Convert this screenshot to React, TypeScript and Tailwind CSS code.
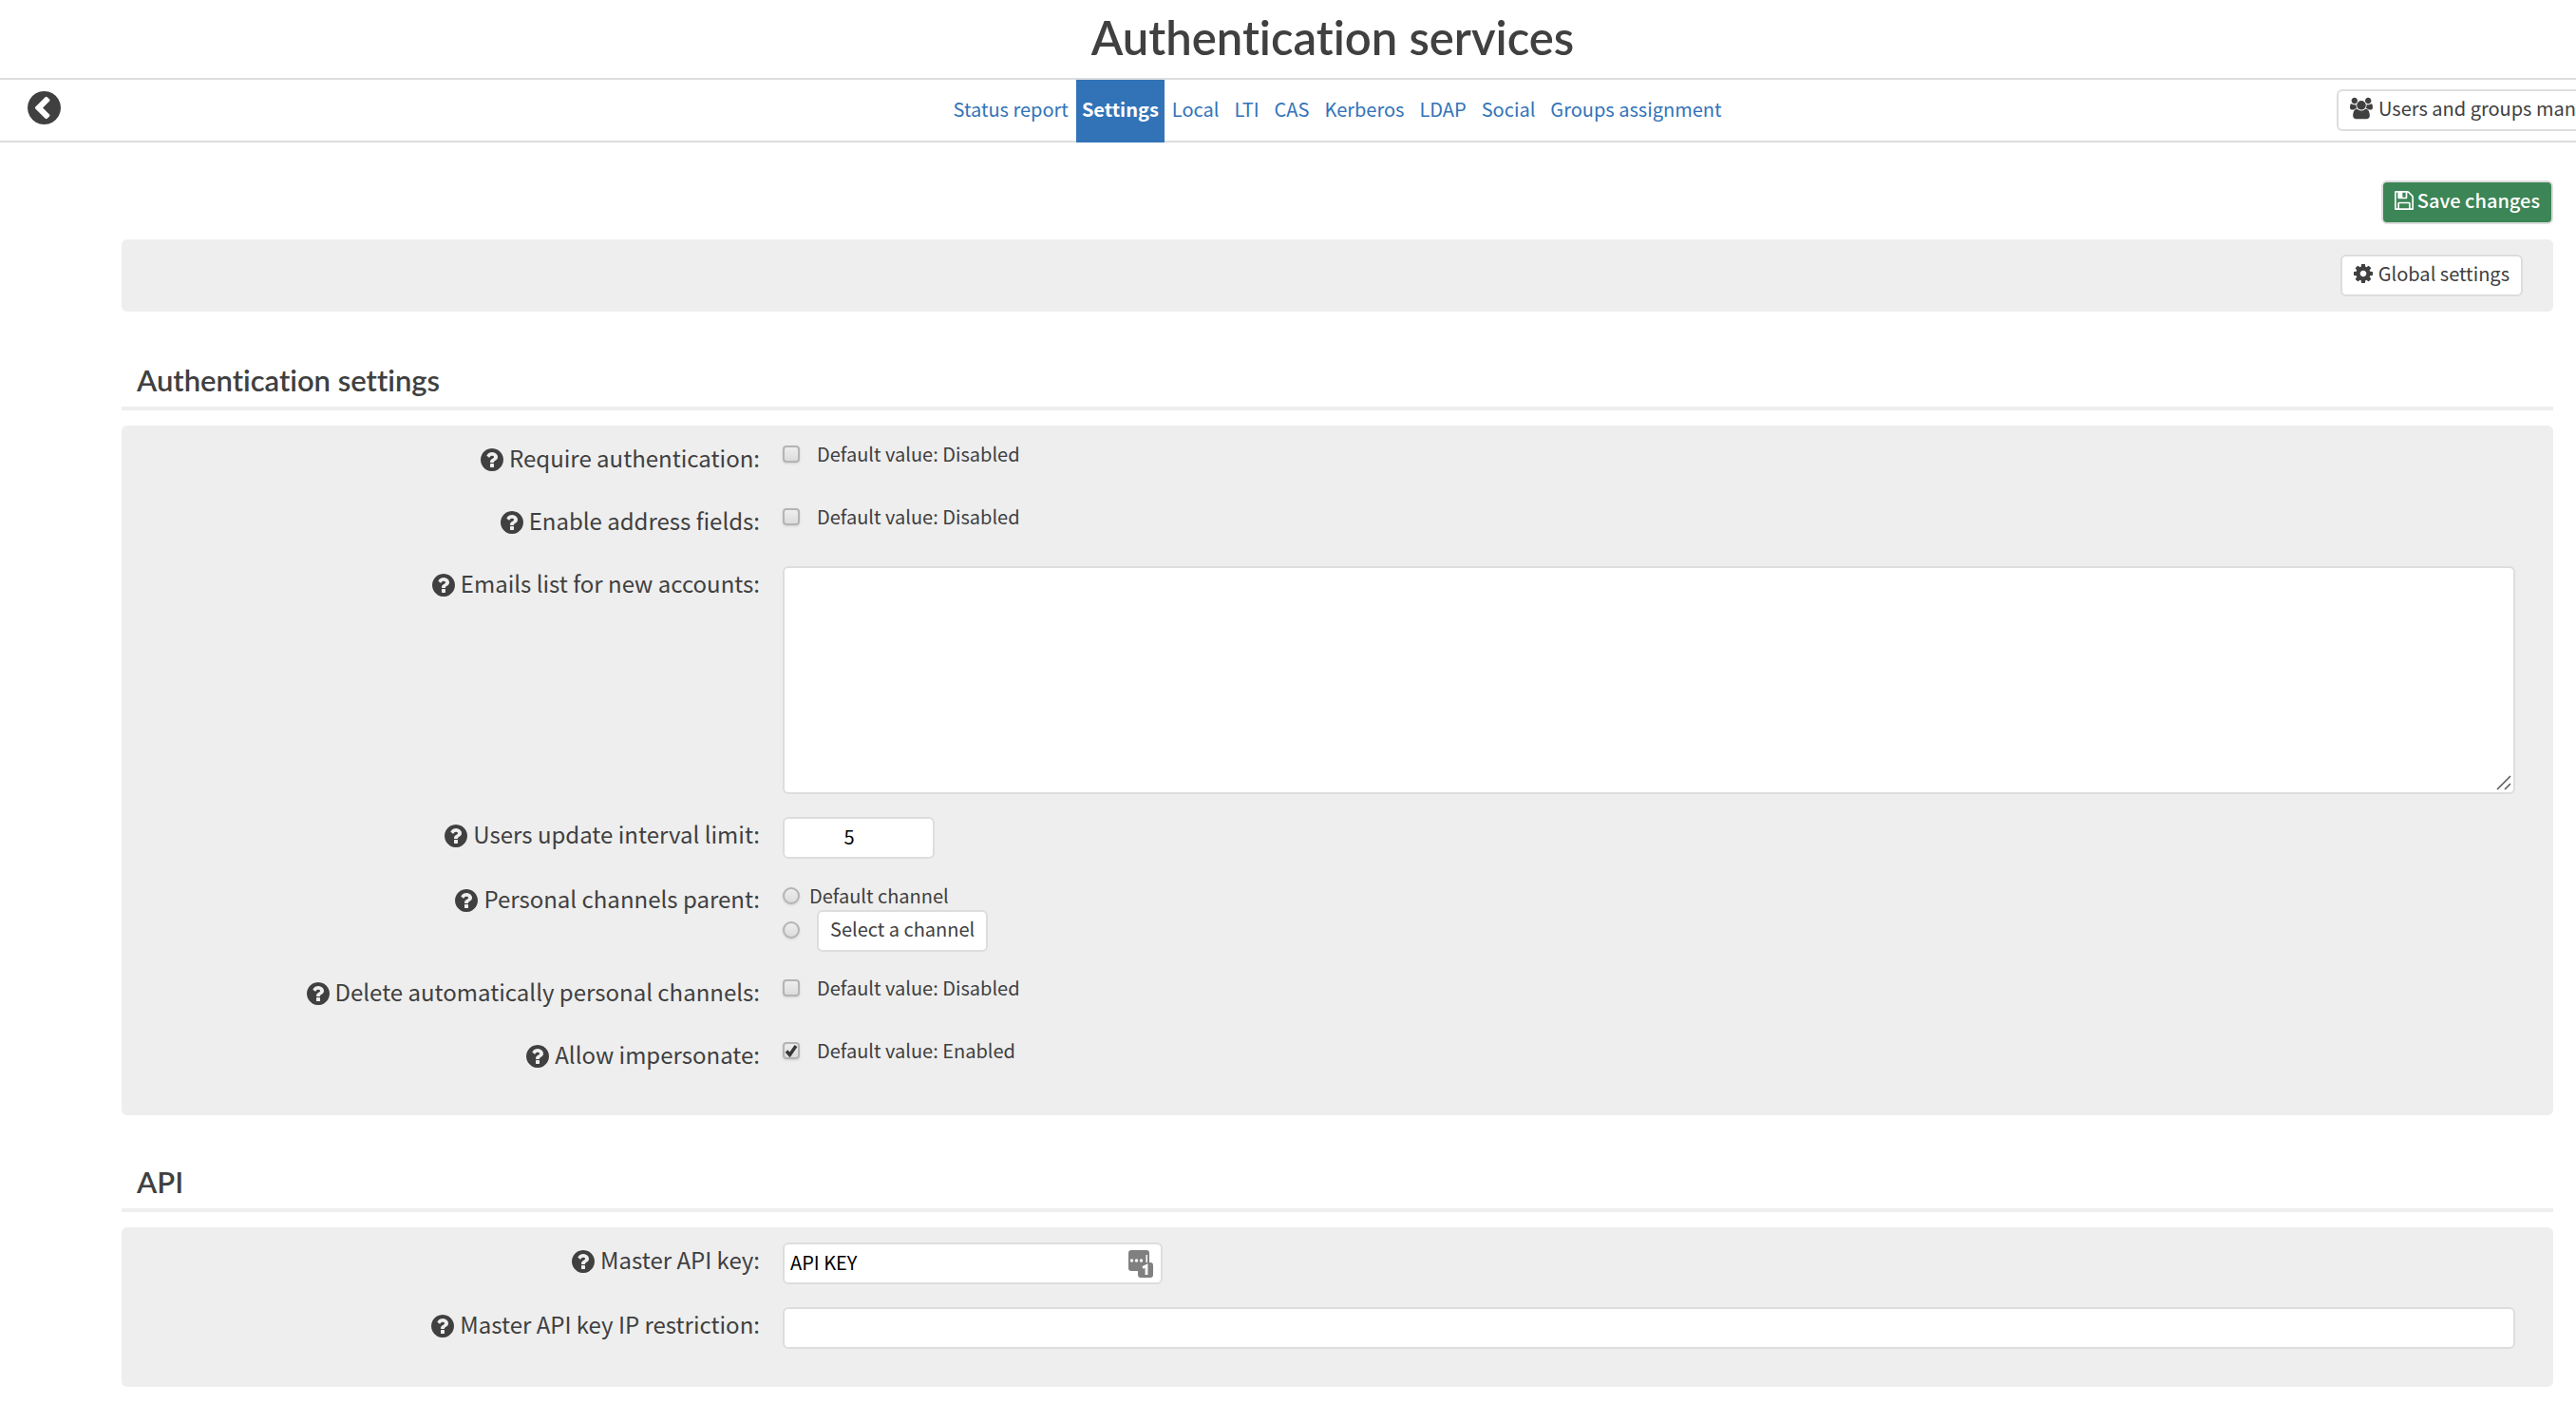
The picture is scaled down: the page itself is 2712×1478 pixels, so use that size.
import React, { useState } from "react";
import type { ReactNode } from "react";

const PATHS = {
  question:
    "M1024 1376v-192q0-14-9-23t-23-9h-192q-14 0-23 9t-9 23v192q0 14 9 23t23 9h192q14 0 23-9t9-23zm256-672q0-88-55.5-163t-138.5-116-170-41q-243 0-371 213-15 24 8 42l132 100q7 6 19 6 16 0 25-12 53-68 86-92 34-24 86-24 48 0 85.5 26t37.5 59q0 38-20 61t-68 45q-63 28-115.5 86.5t-52.5 125.5v36q0 14 9 23t23 9h192q14 0 23-9t9-23q0-19 21.5-49.5t54.5-49.5q32-18 49-28.5t46-35 44.5-48 28-60.5 12.5-81zm384 192q0 209-103 385.5t-279.5 279.5-385.5 103-385.5-103-279.5-279.5-103-385.5 103-385.5 279.5-279.5 385.5-103 385.5 103 279.5 279.5 103 385.5z",
  back:
    "M1037 1395l102-102q19-19 19-45t-19-45l-307-307 307-307q19-19 19-45t-19-45l-102-102q-19-19-45-19t-45 19l-454 454q-19 19-19 45t19 45l454 454q19 19 45 19t45-19zm627-499q0 209-103 385.5t-279.5 279.5-385.5 103-385.5-103-279.5-279.5-103-385.5 103-385.5 279.5-279.5 385.5-103 385.5 103 279.5 279.5 103 385.5z",
  floppy:
    "M512 1536h768v-384h-768v384zm896 0h128v-896q0-14-10-38.5t-20-34.5l-281-281q-10-10-34-20t-39-10v416q0 40-28 68t-68 28h-576q-40 0-68-28t-28-68v-416h-128v1280h128v-416q0-40 28-68t68-28h832q40 0 68 28t28 68v416zm-384-928v-320q0-13-9.5-22.5t-22.5-9.5h-192q-13 0-22.5 9.5t-9.5 22.5v320q0 13 9.5 22.5t22.5 9.5h192q13 0 22.5-9.5t9.5-22.5zm640 32v928q0 40-28 68t-68 28h-1344q-40 0-68-28t-28-68v-1344q0-40 28-68t68-28h928q40 0 88 20t76 48l280 280q28 28 48 76t20 88z",
  cog:
    "M1152 896q0-106-75-181t-181-75-181 75-75 181 75 181 181 75 181-75 75-181zm512-109v222q0 12-8 23t-20 13l-185 28q-19 54-39 91 35 50 107 138 10 12 10 25t-9 23q-27 37-99 108t-94 71q-12 0-26-9l-138-108q-44 23-91 38-16 136-29 186-7 28-36 28h-222q-14 0-24.5-8.5t-11.5-21.5l-28-184q-49-16-90-37l-141 107q-10 9-25 9-14 0-25-11-126-114-165-168-7-10-7-23 0-12 8-23 15-21 51-66.5t54-70.5q-27-50-41-99l-183-27q-13-2-21-12.5t-8-23.5v-222q0-12 8-23t19-13l186-28q14-46 39-92-40-57-107-138-10-12-10-24 0-10 9-23 26-36 98.5-107.5t94.5-71.5q13 0 26 10l138 107q44-23 91-38 16-136 29-186 7-28 36-28h222q14 0 24.5 8.5t11.5 21.5l28 184q49 16 90 37l142-107q9-9 24-9 13 0 25 10 129 119 165 170 7 8 7 22 0 12-8 23-15 21-51 66.5t-54 70.5q26 50 41 98l183 28q13 2 21 12.5t8 23.5z",
  users:
    "M593 896q-162 5-265 128h-134q-82 0-138-40.5t-56-118.5q0-353 124-353 6 0 43.5 21t97.5 42.5 119 21.5q67 0 133-23-5 37-5 66 0 139 81 256zm1071 637q0 120-73 189.5t-194 69.5h-874q-121 0-194-69.5t-73-189.5q0-53 3.5-103.5t14-109 26.5-108.5 43-97.5 62-81 85.5-53.5 111.5-20q10 0 43 21.5t73 48 107 48 135 21.5 135-21.5 107-48 73-48 43-21.5q61 0 111.5 20t85.5 53.5 62 81 43 97.5 26.5 108.5 14 109 3.5 103.5zm-1024-1277q0 106-75 181t-181 75-181-75-75-181 75-181 181-75 181 75 75 181zm704 384q0 159-112.5 271.5t-271.5 112.5-271.5-112.5-112.5-271.5 112.5-271.5 271.5-112.5 271.5 112.5 112.5 271.5zm576 225q0 78-56 118.5t-138 40.5h-134q-103-123-265-128 81-117 81-256 0-29-5-66 66 23 133 23 59 0 119-21.5t97.5-42.5 43.5-21q124 0 124 353zm-128-609q0 106-75 181t-181 75-181-75-75-181 75-181 181-75 181 75 75 181z",
};

type IconProps = { name: keyof typeof PATHS; className: string };

function Icon({ name, className }: IconProps) {
  return (
    <svg
      viewBox={name === "users" ? "0 0 1920 1792" : "128 128 1536 1536"}
      fill="currentColor"
      aria-hidden="true"
      className={className}
    >
      <path d={PATHS[name]} />
    </svg>
  );
}

const button =
  "flex h-11 items-center gap-1.5 rounded-md border-2 border-[#dddddd] bg-white px-3 pb-1 text-xl whitespace-nowrap";
const field = "block rounded-md border-2 border-[#dddddd] bg-white text-black";
const checkbox =
  "peer block h-[18px] w-[18px] appearance-none rounded border-2 border-[#b4b4b4] bg-linear-to-b from-[#eeeeee] to-[#dcdcdc] shadow-sm";
const radio =
  "h-[18px] w-[18px] shrink-0 appearance-none rounded-full border-2 border-[#b4b4b4] bg-linear-to-b from-[#eeeeee] to-[#dcdcdc] shadow-sm";

function Section({ title, children }: { title: string; children: ReactNode }) {
  return (
    <section className="mt-[38px]">
      <h2 className="border-b-4 border-[#eeeeee] px-4 pt-3 pb-2 font-[Lato,sans-serif] text-[31px] leading-10 font-semibold [font-variant-ligatures:none]">
        {title}
      </h2>
      <div className="mt-4 rounded-md bg-[#eeeeee] pt-4 pr-10 pb-4">{children}</div>
    </section>
  );
}

function Row({ label, id, children }: { label: string; id: string; children: ReactNode }) {
  return (
    <div className="flex items-start gap-6 pb-6">
      <label
        htmlFor={id}
        className="flex w-[672px] shrink-0 items-center justify-end gap-1.5 pt-0.5 text-2xl leading-8"
      >
        <Icon name="question" className="mt-1 h-6 w-6" />
        {label}:
      </label>
      <div className="min-w-0 flex-1">{children}</div>
    </div>
  );
}

function Toggle({ id, initial = false }: { id: string; initial?: boolean }) {
  const [on, setOn] = useState(initial);
  return (
    <div className="flex h-[42px] items-start">
      <div className="flex h-7 items-center">
        <div className="relative h-[18px] w-[18px]">
          <input
            id={id}
            type="checkbox"
            checked={on}
            onChange={(e) => setOn(e.target.checked)}
            className={checkbox}
          />
          <svg
            viewBox="0 0 18 18"
            aria-hidden="true"
            className="pointer-events-none absolute inset-0 hidden h-[18px] w-[18px] peer-checked:block"
          >
            <path d="M4 9.500l3.500 4L14 4" fill="none" stroke="#383838" strokeWidth="3.500" />
          </svg>
        </div>
        <span className="ml-[18px] text-xl leading-7">
          Default value: {initial ? "Enabled" : "Disabled"}
        </span>
      </div>
    </div>
  );
}

function PasswordBadge() {
  return (
    <svg viewBox="0 0 26 29" aria-hidden="true" className="h-[29px] w-[26px]">
      <path
        d="M3 0h16q3 0 3 3v10h1q3 0 3 3v10q0 3-3 3H13q-3 0-3-3v-4H3q-3 0-3-3V3q0-3 3-3z"
        fill="#808080"
      />
      <g fill="#ffffff">
        <circle cx="3.500" cy="11" r="1.700" />
        <circle cx="8.500" cy="11" r="1.700" />
        <circle cx="13.500" cy="11" r="1.700" />
        <rect x="18.500" y="5" width="1.500" height="8" />
      </g>
      <path d="M15 18.500l4-2v9.500" fill="none" stroke="#ffffff" strokeWidth="2.800" />
    </svg>
  );
}

const TABS = [
  "Status report",
  "Settings",
  "Local",
  "LTI",
  "CAS",
  "Kerberos",
  "LDAP",
  "Social",
  "Groups assignment",
];

export default function App() {
  return (
    <div className="min-h-screen overflow-x-hidden bg-white font-['Noto_Sans_CJK_SC','Noto_Sans',sans-serif] text-[#404040]">
      <h1 className="pb-1 pl-[94px] text-center font-[Lato,sans-serif] text-[49px] leading-[78px] font-semibold [font-variant-ligatures:none]">
        Authentication services
      </h1>

      <header className="grid h-[68px] grid-cols-[252px_1fr_252px] border-y-2 border-[#dddddd]">
        <a href="#back" aria-label="Back" className="ml-[29px] self-start pt-3">
          <Icon name="back" className="h-[35px] w-[35px]" />
        </a>
        <nav className="-mb-0.5 ml-[104px] flex justify-center text-xl">
          {TABS.map((tab) => (
            <a
              key={tab}
              href={"#" + tab.toLowerCase().replace(" ", "-")}
              className={
                tab === "Settings"
                  ? "flex items-center bg-[#3273b8] px-1.5 pb-1 font-bold text-white"
                  : "flex items-center px-2 pb-1 text-[#3273b8]"
              }
            >
              {tab}
            </a>
          ))}
        </nav>
        <div className="flex items-start overflow-hidden pt-2.5">
          <button type="button" className={button + " shrink-0"}>
            <Icon name="users" className="h-6 w-6" />
            Users and groups management
          </button>
        </div>
      </header>

      <main className="mr-6 ml-32">
        <div className="flex justify-end pt-10 pb-4">
          <button
            type="button"
            className="flex h-[46px] items-center gap-1 rounded-md border-2 border-[#dddddd] bg-[#3c8556] px-3 pb-1 text-xl font-medium whitespace-nowrap text-white"
          >
            <Icon name="floppy" className="h-5 w-5" />
            Save changes
          </button>
        </div>
        <div className="mb-10 flex justify-end rounded-md bg-[#eeeeee] px-8 py-4">
          <button type="button" className={button}>
            <Icon name="cog" className="h-5 w-5" />
            Global settings
          </button>
        </div>

        <Section title="Authentication settings">
          <Row label="Require authentication" id="require">
            <Toggle id="require" />
          </Row>
          <Row label="Enable address fields" id="address">
            <Toggle id="address" />
          </Row>
          <Row label="Emails list for new accounts" id="emails">
            <div className="relative">
              <textarea id="emails" className={field + " h-60 w-full resize-none p-2 text-xl"} />
              <svg
                viewBox="0 0 16 16"
                aria-hidden="true"
                className="pointer-events-none absolute right-1 bottom-1 h-4 w-4"
              >
                <path d="M1 15L15 1M9 15l6-6" stroke="#555555" strokeWidth="1.500" fill="none" />
              </svg>
            </div>
          </Row>
          <Row label="Users update interval limit" id="interval">
            <input
              id="interval"
              type="text"
              inputMode="numeric"
              defaultValue="5"
              className={field + " h-11 w-40 pr-6 pb-1 pl-1 text-center text-xl"}
            />
          </Row>
          <Row label="Personal channels parent" id="default-channel">
            <div className="h-[74px]">
              <label className="flex h-[30px] items-center gap-2.5 text-xl">
                <input id="default-channel" type="radio" name="parent" className={radio} />
                Default channel
              </label>
              <div className="flex items-start gap-[18px]">
                <input type="radio" name="parent" aria-label="Other channel" className={radio + " mt-3"} />
                <button type="button" className={button}>
                  Select a channel
                </button>
              </div>
            </div>
          </Row>
          <Row label="Delete automatically personal channels" id="delete">
            <Toggle id="delete" />
          </Row>
          <Row label="Allow impersonate" id="impersonate">
            <Toggle id="impersonate" initial />
          </Row>
        </Section>

        <Section title="API">
          <Row label="Master API key" id="key">
            <div className="relative w-[400px]">
              <input id="key" type="text" defaultValue="API KEY" className={field + " h-11 w-full px-1.5 pb-1 text-xl"} />
              <div className="absolute top-2 right-2.5">
                <PasswordBadge />
              </div>
            </div>
          </Row>
          <Row label="Master API key IP restriction" id="ip">
            <input id="ip" type="text" className={field + " h-11 w-full px-1.5 pb-1 text-xl"} />
          </Row>
        </Section>
      </main>
    </div>
  );
}
